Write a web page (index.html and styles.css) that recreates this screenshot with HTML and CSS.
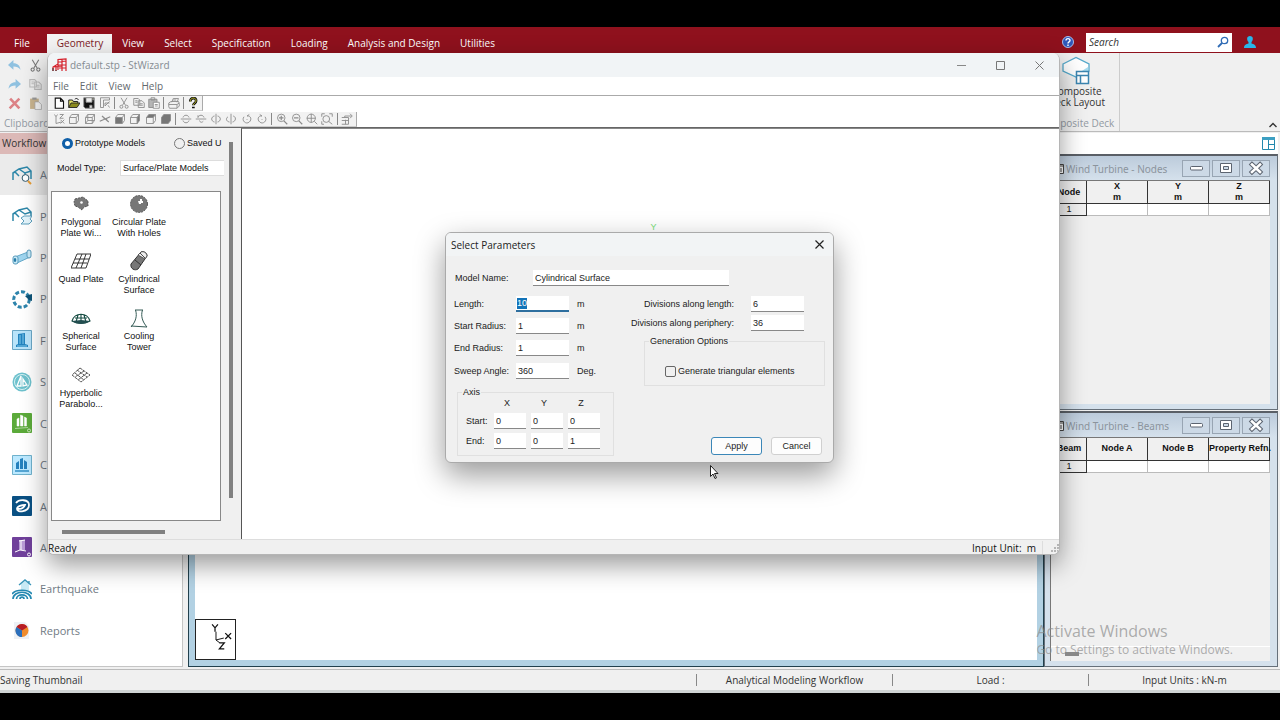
FILE: index.html
```html
<!DOCTYPE html>
<html lang="en">
<head>
  <meta charset="UTF-8">
  <meta name="viewport" content="width=device-width, initial-scale=1.0">
  <title>default.stp - StWizard</title>
  <link rel="stylesheet" href="styles.css">
</head>
<body>

<!-- shared icons -->
<svg class="defs" width="0" height="0">
  <symbol id="i-min" viewBox="0 0 26 15"><rect x="7.500" y="5.500" width="12" height="3.500" rx="1" fill="#fff" stroke="#5c6470"/></symbol>
  <symbol id="i-max" viewBox="0 0 26 15"><path d="M7.500 2.500h11v9h-11z" fill="#fff" stroke="#5c6470"/><path d="M10.500 5.500h5v3h-5z" fill="#ccd9e6" stroke="#5c6470"/></symbol>
  <symbol id="i-close" viewBox="0 0 26 15"><path d="M9 3.500l8 7.500M17 3.500L9 11" stroke="#5c6470" stroke-width="4.600" stroke-linecap="square"/><path d="M9 3.500l8 7.500M17 3.500L9 11" stroke="#fff" stroke-width="2.600" stroke-linecap="square"/></symbol>
  <symbol id="i-cut" viewBox="0 0 16 16"><path d="M4 1l6 10M12 1L6 11" /><circle cx="4.500" cy="13" r="2"/><circle cx="11.500" cy="13" r="2"/></symbol>
  <symbol id="i-copy" viewBox="0 0 16 16"><path d="M1 2h6l2 2v7H1zM7 5h5l3 3v6H7zM3 5h3M3 7h3M9 9h4M9 11h4"/></symbol>
  <symbol id="i-paste" viewBox="0 0 16 16"><path d="M1 3h11v11H1z" fill="#b5b5b5"/><path d="M4 1h5v3H4z"/><path d="M7 7h8v8H7zM9 10h4M9 12h4" fill="#fff"/></symbol>
</svg>

<div class="app">
  <nav class="tabs">
    <a href="#" class="tab file">File</a>
    <a href="#" class="tab active">Geometry</a>
    <a href="#" class="tab">View</a>
    <a href="#" class="tab">Select</a>
    <a href="#" class="tab">Specification</a>
    <a href="#" class="tab">Loading</a>
    <a href="#" class="tab">Analysis and Design</a>
    <a href="#" class="tab">Utilities</a>
    <div class="tabs-right">
      <button class="plain" aria-label="Help"><svg width="12" height="12" viewBox="0 0 12 12"><circle cx="6" cy="6" r="5.500" fill="#2f57ba" stroke="#a9bde8"/><path d="M4 4.500c0-2.500 4-2.500 4 0C8 6 6 5.800 6 7.500M6 8.500v1.500" fill="none" stroke="#fff" stroke-width="1.400"/></svg></button>
      <div class="search">
        <input type="text" placeholder="Search" aria-label="Search">
        <svg width="12" height="12" viewBox="0 0 12 12"><circle cx="7.500" cy="4.500" r="3.200" fill="none" stroke="#2f6bb5" stroke-width="1.300"/><path d="M5 7L1 11" stroke="#2f6bb5" stroke-width="1.800"/></svg>
      </div>
      <button class="plain user" aria-label="Account"><svg width="12" height="12" viewBox="0 0 12 12"><path d="M6 0c3.500 0 3.500 4 1.500 6v1.500c2 .5 4.500 1 4.500 4.500H0c0-3.500 2.500-4 4.500-4.500V6C2.500 4 2.500 0 6 0z" fill="#29b5e8"/></svg></button>
    </div>
  </nav>

  <div class="ribbon">
    <div class="clipboard">
      <div class="clip-icons">
        <svg viewBox="0 0 12 12"><path d="M0 5.500L5 1v3c4 0 6 2 6.500 6C10 7.800 8 7 5 7v3z" fill="#8fc1e0"/></svg>
        <svg class="line" viewBox="0 0 16 16"><use href="#i-cut"/></svg>
        <svg viewBox="0 0 12 12"><path d="M12 5.500L7 1v3C3 4 1 6 .500 10 2 7.800 4 7 7 7v3z" fill="#8fc1e0"/></svg>
        <svg class="line pale" viewBox="0 0 16 16"><use href="#i-copy"/></svg>
        <svg viewBox="0 0 12 12"><path d="M2 1.500l8.500 9M10.500 1.500L1.500 10.500" stroke="#dc8286" stroke-width="2.400"/></svg>
        <svg viewBox="0 0 12 12"><path d="M1 1.500h8V11H1z" fill="#c9b48f"/><path d="M3 .500h4v2H3z" fill="#9a9a9a"/><path d="M5.500 4.500H9l2.500 2.500v4.500h-6z" fill="#f7f7f7" stroke="#aaa" stroke-width=".7"/></svg>
      </div>
      <div class="group-name">Clipboard</div>
    </div>
    <div class="deck">
      <button class="plain deck-button">
        <svg width="30" height="30" viewBox="0 0 30 30"><path d="M2 8L15 1.500 28 8v7L15 21 2 15z" fill="#fff" stroke="#54a9cb" stroke-width="1.300"/><path d="M13 20l14-9v4h-9z" fill="#a8dcef"/><path d="M15.500 15.500h12v12h-12zM15.500 19.500h12M19.500 19.500v8" fill="#fff" stroke="#3c85b0" stroke-width="1.500"/></svg>
        <span>Composite</span>
        <span>Deck Layout</span>
      </button>
      <div class="group-name">Composite Deck</div>
    </div>
    <button class="plain collapse" aria-label="Collapse ribbon"><svg width="8" height="6" viewBox="0 0 8 6"><path d="M.500 5L4 1.500 7.500 5" fill="none" stroke="#333" stroke-width="1.400"/></svg></button>
  </div>

  <div class="workflow">
    <div class="workflow-title">Workflow</div>
    <div class="workflow-bar">
      <svg width="13" height="13" viewBox="0 0 13 13"><path d="M.500.500h12v12H.500zM6.500 3v9.500M6.500 7.500h6" fill="#fff" stroke="#2388ad"/><path d="M0 0h13v3H0z" fill="#3c9fc2"/></svg>
    </div>
  </div>

  <div class="main">
    <ul class="side">
      <li class="on"><svg viewBox="0 0 20 20"><path d="M1 15V8l6-4 8-2 4 4v8M1 8l2-1 4 4M7 4l6 4 6-2M13 8v4" fill="none" stroke="#2c86a8" stroke-width="1.500"/><circle cx="13.500" cy="13" r="3.400" fill="#fff" stroke="#30586c"/><path d="M16 16l3 3" stroke="#e59b35" stroke-width="2"/></svg>A</li>
      <li><svg viewBox="0 0 20 20"><path d="M1 15V8l6-4 8-2 4 4v5M1 8l2-1 4 4M7 4l6 4 6-2" fill="none" stroke="#2c86a8" stroke-width="1.500"/><path d="M9 12l3-2h8l-2 3 2 2-3 3H9l3-3z" fill="#e4f5fc" stroke="#5c9fbd"/></svg>P</li>
      <li><svg viewBox="0 0 20 20"><path d="M3 9l13-5 2 5-13 6z" fill="#9fd5ef" stroke="#65a9c9"/><rect x="15" y="2" width="4" height="8" rx="2" fill="#c8e9f7" stroke="#5a9cbd"/><rect x="1" y="8" width="5" height="8" rx="2" fill="#c8e9f7" stroke="#5a9cbd"/><ellipse cx="3" cy="12" rx="1.300" ry="2" fill="#277da8"/></svg>P</li>
      <li><svg viewBox="0 0 20 20"><circle cx="9.500" cy="10.500" r="7.800" fill="none" stroke="#2d84ac" stroke-width="3" stroke-dasharray="4 2"/><path d="M13 7l7-2v7l-3-1z" fill="#0d5378"/></svg>P</li>
      <li><svg viewBox="0 0 20 20"><path d="M.500.500h19v19H.500z" fill="#b9e4fa" stroke="#6aa7c6"/><path d="M6 4l7-1v11l3 1v2H4v-2l2-1z" fill="#2384bf"/><path d="M8 5v9M11 4v10M5 16h10" stroke="#83cbed"/></svg>F</li>
      <li><svg viewBox="0 0 20 20"><circle cx="10" cy="10" r="9.500" fill="#6dc1cd"/><circle cx="10" cy="10" r="7.500" fill="none" stroke="#d7f1f3"/><path d="M5 14L9 4v10zM11 7l4 6-4 1z" fill="none" stroke="#fff" stroke-width="1.300"/></svg>S</li>
      <li><svg viewBox="0 0 20 20"><rect width="20" height="20" rx="1" fill="#5baa3a"/><path d="M5 13V6l2-1v8zM8.500 13V2l2.500 1v10zM12.500 13V4l2 1v8zM3 15.500l13-1" fill="#fff" stroke="#fff" stroke-width=".5"/><circle cx="17" cy="17.500" r="1.500" fill="none" stroke="#cbe9bd"/></svg>C</li>
      <li><svg viewBox="0 0 20 20"><path d="M.500.500h19v19H.500z" fill="#bce9ff" stroke="#6fb2cd"/><path d="M4 14V8l3-2v8zM8 14V4l3-1v11zM12 14V5l3 2v7z" fill="#2481bd"/><path d="M3 16h14" stroke="#338fc6" stroke-width="1.500"/></svg>C</li>
      <li><svg viewBox="0 0 20 20"><rect width="20" height="20" rx="1" fill="#095083"/><path d="M4 7c3-4 13-4 13 2 0 7-12 8-12 4 0-3 5-4 8-4-1 3-4 4-7 4" fill="none" stroke="#fff" stroke-width="1.800"/></svg>A</li>
      <li><svg viewBox="0 0 20 20"><rect width="20" height="20" rx="1" fill="#70409b"/><path d="M7 3h6v10H7z" fill="#b99bd6"/><path d="M3 15l5-2 6 1M7 4l6-1M9 4v9" stroke="#fff" fill="none"/><circle cx="17" cy="17.500" r="1.500" fill="none" stroke="#fff"/></svg>A</li>
      <li><svg viewBox="0 0 20 20"><path d="M9 11V5l4-3 4 3v6" fill="#c8eaf5"/><path d="M7 6l6-5 6 5M17 2v3" fill="none" stroke="#3995b9" stroke-width="1.400"/><path d="M1 20c0-9 18-9 18 0M4.500 20c0-5.500 11-5.500 11 0M8 20c0-2.500 4-2.500 4 0M0 15c4-5 16-5 20 0" fill="none" stroke="#2388b1" stroke-width="1.700"/></svg>Earthquake</li>
      <li><svg viewBox="0 0 20 20"><path d="M2 2h11l4 4v13H2z" fill="#eef1f5"/><circle cx="10" cy="10.500" r="6.500" fill="#ef8b2d"/><path d="M10 10.500L4.500 7a6.500 6.500 0 0 1 11 0z" fill="#b71c24"/><path d="M10 10.500L4.500 7A6.500 6.500 0 0 0 10 17z" fill="#2a6fbd"/></svg>Reports</li>
    </ul>

    <div class="viewport">
      <svg class="axes" viewBox="0 0 40 40"><path d="M20.500 12v8.500l8-2M20.500 20.500l4 3" fill="none" stroke="#111"/><path d="M16.500 4.500l3 3.500 3-3.500M19.500 8v4M30 13.500l6 6M36 13.500l-6 6M24 23.500h5l-5 6h5" fill="none" stroke="#111" stroke-width="1.300"/></svg>
    </div>

    <div class="tables">
      <section class="mdi">
        <header>
          <svg class="doc" width="8" height="10" viewBox="0 0 8 10"><path d="M.500.500h7v9h-7zM.500 2h7M2 5h4M2 7h4" fill="#fff" stroke="#444"/></svg>
          <h2>Wind Turbine - Nodes</h2>
          <button aria-label="Minimize"><svg><use href="#i-min"/></svg></button>
          <button aria-label="Maximize"><svg><use href="#i-max"/></svg></button>
          <button aria-label="Close"><svg><use href="#i-close"/></svg></button>
        </header>
        <div class="sheet">
          <table>
            <thead><tr><th>Node</th><th>X<br>m</th><th>Y<br>m</th><th>Z<br>m</th></tr></thead>
            <tbody><tr><th>1</th><td></td><td></td><td></td></tr></tbody>
          </table>
        </div>
      </section>
      <section class="mdi">
        <header>
          <svg class="doc" width="8" height="10" viewBox="0 0 8 10"><path d="M.500.500h7v9h-7zM.500 2h7M2 5h4M2 7h4" fill="#fff" stroke="#444"/></svg>
          <h2>Wind Turbine - Beams</h2>
          <button aria-label="Minimize"><svg><use href="#i-min"/></svg></button>
          <button aria-label="Maximize"><svg><use href="#i-max"/></svg></button>
          <button aria-label="Close"><svg><use href="#i-close"/></svg></button>
        </header>
        <div class="sheet">
          <table>
            <thead><tr><th>Beam</th><th>Node A</th><th>Node B</th><th>Property Refn.</th></tr></thead>
            <tbody><tr><th>1</th><td></td><td></td><td></td></tr></tbody>
          </table>
          <div class="sheet-scroll"><div class="sheet-thumb"></div></div>
        </div>
      </section>
    </div>
  </div>

  <footer class="status">
    <div>Saving Thumbnail</div>
    <div>Analytical Modeling Workflow</div>
    <div>Load :</div>
    <div>Input Units : kN-m</div>
  </footer>
</div>

<div class="wizard">
  <header class="wizard-title">
    <svg width="15" height="14" viewBox="0 0 15 14"><path d="M1 13V9l5-3V1.500L14 1v12M6 2v10M10 1v12M6 4l8-1M6 7h8M1 9l9-1M4 8v5M7 10h7" fill="none" stroke="#d5202b" stroke-width="1.200"/><path d="M1 13v-3M4 12v1" stroke="#333"/></svg>
    <h1>default.stp - StWizard</h1>
    <button class="plain" aria-label="Minimize"><svg width="9" height="9" viewBox="0 0 9 9"><path d="M0 4.500h9" stroke="#888"/></svg></button>
    <button class="plain" aria-label="Maximize"><svg width="9" height="9" viewBox="0 0 9 9"><path d="M.500.500h8v8h-8z" fill="none" stroke="#777"/></svg></button>
    <button class="plain" aria-label="Close"><svg width="9" height="9" viewBox="0 0 9 9"><path d="M.500.500l8 8M8.500.500l-8 8" stroke="#777"/></svg></button>
  </header>
  <nav class="menu">
    <a href="#">File</a>
    <a href="#">Edit</a>
    <a href="#">View</a>
    <a href="#">Help</a>
  </nav>

  <div class="toolbar bar-file">
    <svg viewBox="0 0 16 16"><path d="M3 1.500h7l4 4V15H3zM10 1.500v4h4" fill="#fff" stroke="#111" stroke-width="1.500"/></svg>
    <svg viewBox="0 0 16 16"><path d="M1 14V4h5l1 2h6v2" fill="#e6e36a" stroke="#222" stroke-width="1.300"/><path d="M1 14l3-6h12l-4 6z" fill="#8b8a1e" stroke="#222"/><path d="M9 3c2-2 4-1 5 1" fill="none" stroke="#222"/></svg>
    <svg viewBox="0 0 16 16"><path d="M1 1h14v14H3l-2-2z" fill="#111"/><path d="M4 1h8v6H4z" fill="#eee"/><path d="M9 11h3v4H9z" fill="#eee"/><path d="M13 2h1v2h-1z" fill="#a5a53a"/></svg>
    <svg viewBox="0 0 16 16"><path d="M2 14V1h12v3H6v10zM8 8h6M8 8v4M8 12l6-6M12 11l2 3"/></svg>
    <i></i>
    <svg><use href="#i-cut"/></svg>
    <svg><use href="#i-copy"/></svg>
    <svg><use href="#i-paste"/></svg>
    <i></i>
    <svg viewBox="0 0 16 16"><path d="M5 7l2-5h7l-2 5M1 8l3-2h10l1 3v3l-3 3H2l-1-2zM1 10h11l3-2M12 10v5M7 4h4"/></svg>
    <i></i>
    <svg viewBox="0 0 16 16"><path d="M4.500 6C4 0 13 0 12 5.500c0 2.500-3.500 3-3.500 5.500M8.500 13v2" stroke="#111" stroke-width="3.600"/><path d="M4.500 6C4 0 13 0 12 5.500c0 2.500-3.500 3-3.500 5" stroke="#c6c52c" stroke-width="1.300"/></svg>
  </div>
  <div class="toolbar bar-view">
    <svg viewBox="0 0 16 16"><path d="M2 2l2 3 2-3M4 5v9l7-2M9 2h5l-5 5h5M10 9l5 5M15 9l-5 5"/></svg>
    <svg viewBox="0 0 16 16"><path d="M2 6h9v8H2zM2 6l3-4h9l-3 4M14 2v8l-3 4"/></svg>
    <svg viewBox="0 0 16 16"><path d="M2 6h9v8H2zM2 6l3-4h9l-3 4M14 2v8l-3 4M5 2v8h9M5 10l-3 4"/></svg>
    <svg viewBox="0 0 16 16"><path d="M1 11l14-6M4 4l9 8M6 8h5" stroke-width="1.600"/></svg>
    <svg viewBox="0 0 16 16"><path d="M2 6l3-4h9l-3 4M14 2v8l-3 4"/><path d="M2 6h9v8H2z" fill="#777"/></svg>
    <svg viewBox="0 0 16 16"><path d="M2 6h9v8H2zM2 6l3-4h9l-3 4"/><path d="M14 2v8l-3 4V6z" fill="#777"/></svg>
    <svg viewBox="0 0 16 16"><path d="M2 6h9v8H2zM14 2v8l-3 4"/><path d="M2 6l3-4h9l-3 4z" fill="#777"/></svg>
    <svg viewBox="0 0 16 16"><path d="M2 6l3-4h9v8l-3 4H2z" fill="#777"/></svg>
    <i></i>
    <svg viewBox="0 0 16 16"><path d="M1 8h14M4 6c1-4 7-4 8 0M4 10c1 4 7 4 8 0"/></svg>
    <svg viewBox="0 0 16 16"><path d="M1 8h14M4 6c1-4 7-4 8 0M6 10c1 3 3 3 5 1M4 6V3"/></svg>
    <svg viewBox="0 0 16 16"><path d="M8 1v14M6 4c-5 1-5 7 0 8M10 4c5 1 5 7 0 8"/></svg>
    <svg viewBox="0 0 16 16"><path d="M8 1v14M6 12c-5-1-5-5-2-7M10 12c5-1 5-7 1-8"/></svg>
    <svg viewBox="0 0 16 16"><path d="M4 5c-4 5 3 11 7 7 4-3 2-9-3-8M8 4l3-2M8 8v1"/></svg>
    <svg viewBox="0 0 16 16"><path d="M12 5c4 5-3 11-7 7-4-3-2-9 3-8M8 4L5 2M8 8v1"/></svg>
    <i></i>
    <svg viewBox="0 0 16 16"><circle cx="7" cy="6.500" r="5"/><path d="M4 6.500h6M7 3.500v6M10.500 10.500L15 15" stroke-width="1.600"/></svg>
    <svg viewBox="0 0 16 16"><circle cx="7" cy="6.500" r="5"/><path d="M4 6.500h6M10.500 10.500L15 15" stroke-width="1.600"/></svg>
    <svg viewBox="0 0 16 16"><circle cx="7" cy="7" r="5.500"/><path d="M1 7h12M7 1v12M11 11l4 4"/></svg>
    <svg viewBox="0 0 16 16"><circle cx="7" cy="8" r="4.500"/><path d="M1 5V1h4M11 1h4v4M1 11v4h3M10 11l5 4"/></svg>
    <i></i>
    <svg viewBox="0 0 16 16"><path d="M1 6h9v9H1M5 6V4h9M12 1l3 3-3 3M1 10h9M6 9v6"/></svg>
  </div>

  <div class="wizard-body">
    <aside class="models">
      <div class="models-main">
        <div class="sources">
          <label><input type="radio" name="source" checked>Prototype Models</label>
          <label><input type="radio" name="source">Saved U</label>
        </div>
        <div class="model-type">
          <label for="modelType">Model Type:</label>
          <select id="modelType"><option>Surface/Plate Models</option></select>
        </div>
        <ul class="shapes">
          <li><svg viewBox="0 0 20 20"><path d="M4 5l8-2 5 4v5l-4 1-2 3-4-3-3-1-1-4z" fill="#777" stroke="#555" stroke-dasharray="2 1"/><circle cx="10.500" cy="8.500" r="1.300" fill="#fff"/></svg>Polygonal<br>Plate Wi...</li>
          <li><svg viewBox="0 0 20 20"><circle cx="10" cy="10" r="8.500" fill="#777" stroke="#555" stroke-dasharray="2 1"/><path d="M9 7h2V5h2v2h1v2h-2v1h-2z" fill="#fff"/></svg>Circular Plate<br>With Holes</li>
          <li><svg viewBox="0 0 20 20"><path d="M6 3h14l-5 14H0zM4 8h14M2 12h14M11 3L5 17M15 3l-5 14" fill="none" stroke="#222" stroke-width=".9"/></svg>Quad Plate</li>
          <li><svg viewBox="0 0 20 20"><path d="M2 13L12 1c3-1 6 1 6 4L9 18c-3 2-8 0-7-5z" fill="#777" stroke="#333"/><path d="M9 4l3-3c3-1 6 1 6 4l-2 3z" fill="#eee" stroke="#444" stroke-width=".8"/><path d="M6 9l6 5M11 2l5 5" stroke="#222" stroke-width=".8"/></svg>Cylindrical<br>Surface</li>
          <li><svg viewBox="0 0 20 20"><path d="M1 13c3-9 15-9 18 0-5 3-13 3-18 0zM4 10h12M10 6v9M7 7l-2 7M13 7l2 7" fill="none" stroke="#174c43" stroke-width="1.100"/><path d="M1 13c5 4 13 4 18 0l-9-1z" fill="#224e50"/></svg>Spherical<br>Surface</li>
          <li><svg viewBox="0 0 20 20"><path d="M6 2h8M6.500 2c2 6 0 12-4.500 17M13.500 2c-2 6 0 12 4.500 17M2 18l16 1" fill="none" stroke="#345a55" stroke-width="1"/></svg>Cooling<br>Tower</li>
          <li><svg viewBox="0 0 20 20"><path d="M9 3l10 7-9 7L1 10zM6 5l10 7M4 8l9 7M13 6l-9 6M16 8l-9 7" fill="none" stroke="#444" stroke-width=".9" stroke-dasharray="3 .6"/></svg>Hyperbolic<br>Parabolo...</li>
        </ul>
        <div class="thumb-x"></div>
      </div>
      <div class="thumb-y"></div>
    </aside>
    <div class="drawing"><span class="y-mark">Y</span></div>
  </div>

  <footer class="wizard-status">
    <span>Ready</span>
    <span class="unit">Input Unit:&nbsp; m</span>
    <svg width="10" height="10" viewBox="0 0 10 10"><path d="M8 1h2v2H8zM5 4h2v2H5zM8 4h2v2H8zM2 7h2v2H2zM5 7h2v2H5zM8 7h2v2H8z" fill="#b5b5b5"/></svg>
  </footer>
</div>

<form class="dialog">
  <header class="dialog-title">
    <h2>Select Parameters</h2>
    <button type="button" class="plain" aria-label="Close"><svg width="9" height="9" viewBox="0 0 9 9"><path d="M.500.500l8 8M8.500.500l-8 8" stroke="#222" stroke-width="1.200"/></svg></button>
  </header>
  <div class="name-row">
    <label for="modelName">Model Name:</label>
    <input type="text" id="modelName" value="Cylindrical Surface">
  </div>
  <div class="columns">
    <div class="left">
      <div class="row"><label for="length">Length:</label><span class="field"><mark>10</mark><input type="text" id="length" aria-label="Length"></span><span>m</span></div>
      <div class="row"><label for="startRadius">Start Radius:</label><input type="text" id="startRadius" value="1"><span>m</span></div>
      <div class="row"><label for="endRadius">End Radius:</label><input type="text" id="endRadius" value="1"><span>m</span></div>
      <div class="row sweep"><label for="sweep">Sweep Angle:</label><input type="text" id="sweep" value="360"><span>Deg.</span></div>
      <fieldset class="axis">
        <legend>Axis</legend>
        <div class="axis-grid">
          <span></span><b>X</b><b>Y</b><b>Z</b>
          <span>Start:</span><input type="text" aria-label="Start X" value="0"><input type="text" aria-label="Start Y" value="0"><input type="text" aria-label="Start Z" value="0">
          <span>End:</span><input type="text" aria-label="End X" value="0"><input type="text" aria-label="End Y" value="0"><input type="text" aria-label="End Z" value="1">
        </div>
      </fieldset>
    </div>
    <div class="right">
      <div class="row"><label for="divLength">Divisions along length:</label><input type="text" id="divLength" value="6"></div>
      <div class="row"><label for="divPeriphery">Divisions along periphery:</label><input type="text" id="divPeriphery" value="36"></div>
      <fieldset class="options">
        <legend>Generation Options</legend>
        <label><input type="checkbox">Generate triangular elements</label>
      </fieldset>
      <div class="buttons">
        <button type="button" class="default">Apply</button>
        <button type="button">Cancel</button>
      </div>
    </div>
  </div>
</form>

<div class="watermark">
  <p>Activate Windows</p>
  <small>Go to Settings to activate Windows.</small>
</div>

<svg class="cursor" width="9" height="14" viewBox="0 0 9 14"><path d="M.500.500v11l2.500-2.500 2 4.500 1.500-.7-2-4.300H8z" fill="#fff" stroke="#222"/></svg>

</body>
</html>
```

FILE: styles.css
```css
* {
  box-sizing: border-box;
}
body {
  margin: 0;
  height: 100vh;
  padding: 27px 0;
  background: #000;
  overflow: hidden;
  font-family: "Open Sans", "Noto Sans", sans-serif;
  font-size: 10px;
  color: #333;
}
h1, h2, p, ul {
  margin: 0;
  padding: 0;
  font-weight: normal;
  list-style: none;
}
a {
  color: inherit;
  text-decoration: none;
}
button, input, select {
  font: inherit;
  color: inherit;
}
.plain {
  background: transparent;
  border: none;
  padding: 0;
  display: flex;
  align-items: center;
  justify-content: center;
}
.defs {
  position: absolute;
}
.app {
  height: 100%;
  display: flex;
  flex-direction: column;
  background: #f0f0f0;
}

/* Ribbon tabs */
.tabs {
  height: 26px;
  flex: none;
  display: flex;
  align-items: flex-end;
  background: #8f111d;
  color: #fff;
}
.tab {
  height: 19px;
  line-height: 18px;
  padding: 0 10px;
}
.tab.file {
  padding: 0 17px 0 14px;
}
.tab.active {
  background: #f3f3f3;
  color: #7c1823;
  padding: 0 9px 0 10px;
}
.tabs-right {
  margin-left: auto;
  height: 26px;
  display: flex;
  align-items: center;
  padding: 4px 24px 0 0;
}
.search {
  display: flex;
  align-items: center;
  width: 146px;
  height: 19px;
  margin: 0 12px;
  padding-right: 3px;
  background: #fff;
}
.search input {
  flex: 1;
  min-width: 0;
  border: none;
  padding: 0 3px;
  background: transparent;
  outline: none;
}
.search input::placeholder {
  color: #333;
  font-style: italic;
}

/* Ribbon */
.ribbon {
  height: 79px;
  flex: none;
  display: flex;
  border-bottom: 1px solid #bbb;
}
.clipboard {
  width: 48px;
  padding: 6px 0 0 8px;
}
.clip-icons {
  display: grid;
  grid-template-columns: 13px 13px;
  gap: 6px 8px;
}
.clip-icons svg {
  width: 13px;
  height: 13px;
}
.line {
  fill: none;
  stroke: #777;
  stroke-width: 1.3;
}
.line.pale {
  stroke: #bbb;
}
.group-name {
  color: #929aa3;
  line-height: 14px;
}
.clipboard .group-name {
  margin: 6px 0 0 -4px;
}
.deck {
  margin-left: auto;
  width: 86px;
  display: flex;
  flex-direction: column;
  align-items: center;
  border-right: 1px solid #ccc;
}
.deck-button {
  flex-direction: column;
  padding-top: 3px;
  line-height: 11px;
}
.deck .group-name {
  margin-top: 8px;
}
.collapse {
  width: 160px;
  justify-content: flex-end;
  align-items: flex-end;
  padding: 0 3px 3px 0;
}

/* Workflow line */
.workflow {
  height: 22px;
  flex: none;
  display: flex;
  padding: 1px 2px 0 0;
}
.workflow-title {
  width: 183px;
  padding-left: 2px;
  line-height: 21px;
  background: #dcb9b7;
}
.workflow-bar {
  flex: 1;
  display: flex;
  align-items: center;
  justify-content: flex-end;
  padding-right: 3px;
  background: #fff;
}

/* Work area */
.main {
  flex: 1;
  min-height: 0;
  display: flex;
  gap: 5px;
  padding: 0 2px 2px 0;
}
.side {
  width: 183px;
  display: grid;
  grid-auto-rows: 1fr;
  padding-bottom: 15px;
  background: #fff;
  border-right: 1px solid #c5c5c5;
  border-bottom: 1px solid #c5c5c5;
  font-size: 11px;
  color: #707a84;
}
.side li {
  display: flex;
  align-items: center;
  gap: 8px;
  padding-left: 12px;
}
.side li.on {
  background: #ebebeb;
}
.side svg {
  width: 20px;
  height: 20px;
}
.viewport {
  flex: 1;
  display: flex;
  align-items: flex-end;
  background: #fff;
  border: 7px solid #b2d1e3;
  outline: 1px solid #21404d;
  outline-offset: -1px;
}
.axes {
  width: 41px;
  height: 41px;
  border: 1px solid #222;
}
.tables {
  width: 234px;
  margin-left: -5px;
  display: flex;
  flex-direction: column;
  gap: 1px;
}
.mdi {
  flex: 1;
  display: flex;
  flex-direction: column;
  padding: 0 7px 5px 5px;
  background: #d5e1ec;
  border: 1px solid #66707a;
  border-top: 2px solid #5a5f66;
}
.mdi header {
  height: 24px;
  display: flex;
  align-items: center;
  gap: 2px;
  margin: 0 -7px 0 -5px;
  padding: 1px 7px 0 11px;
  background: linear-gradient(#bccbdb, #d5e1ec);
}
.mdi h2 {
  flex: 1;
  font: 10px "Noto Sans", sans-serif;
  color: #8b949d;
  white-space: nowrap;
}
.mdi header button {
  width: 28px;
  height: 17px;
  padding: 0;
  display: flex;
  background: #ccd9e6;
  border: 1px solid #98a5b3;
}
.mdi header button svg {
  width: 26px;
  height: 15px;
}
.sheet {
  flex: 1;
  display: flex;
  flex-direction: column;
  background: #f0f0f0;
  border-top: 1px solid #777;
  border-left: 1px solid #777;
}
.sheet table {
  table-layout: fixed;
  width: 100%;
  border-collapse: collapse;
  font: 9px/11px "Liberation Sans", sans-serif;
  color: #111;
}
.sheet th, .sheet td {
  padding: 0;
  border: 1px solid #333;
  background: #f0f0f0;
  white-space: nowrap;
}
.sheet tr th:first-child {
  width: 35px;
}
.sheet thead th {
  height: 22px;
  border-top: none;
}
.sheet tbody th {
  font-weight: normal;
}
.sheet td {
  height: 12px;
  background: #fff;
  border: 1px solid #bbb;
}
.sheet-scroll {
  margin-top: auto;
  height: 15px;
  border-top: 1px solid #fff;
  padding: 5px 0 0 14px;
}
.sheet-thumb {
  width: 14px;
  height: 4px;
  background: #888;
}
.status {
  flex: none;
  height: 24px;
  display: flex;
  align-items: center;
  border-top: 1px solid #bbb;
  border-bottom: 3px solid #cfd4d4;
  line-height: 12px;
}
.status div {
  width: 196px;
  text-align: center;
  border-left: 1px solid #888;
}
.status div:first-child {
  flex: 1;
  text-align: left;
  border: none;
}
.status div:last-child {
  width: 192px;
}

/* StWizard window */
.wizard {
  position: absolute;
  left: 47px;
  right: 220px;
  top: 53px;
  height: 502px;
  display: flex;
  flex-direction: column;
  background: #fff;
  border: 1px solid #b5b5b5;
  border-top: none;
  border-radius: 7px;
  box-shadow: 0 10px 26px rgba(0, 0, 0, 0.4);
  overflow: hidden;
}
.wizard-title {
  height: 24px;
  display: flex;
  align-items: center;
  gap: 3px;
  padding: 0 2px 0 4px;
  background: #f1f4f6;
}
.wizard-title h1 {
  flex: 1;
  font-size: 10px;
  color: #858b91;
}
.wizard-title button {
  width: 36px;
}
.menu {
  height: 19px;
  display: flex;
  gap: 11px;
  padding-left: 5px;
  line-height: 18px;
  color: #63686d;
  border-bottom: 1px solid #aaa;
}
.toolbar {
  height: 15px;
  display: flex;
  align-items: center;
  justify-content: space-between;
  padding: 0 3px 0 5px;
  background: #f2f2f2;
  border-right: 1px solid #aaa;
  border-bottom: 1px solid #ccc;
}
.toolbar svg {
  width: 12px;
  height: 12px;
  fill: none;
  stroke: #8c8c8c;
  stroke-width: 1.2;
}
.toolbar i {
  width: 1px;
  height: 12px;
  background: #888;
}
.bar-file {
  width: 155px;
  margin-bottom: 1px;
}
.bar-view {
  width: 309px;
}
.wizard-body {
  flex: 1;
  min-height: 0;
  display: flex;
  border-top: 1px solid #666;
  font: 9px/11px "Liberation Sans", sans-serif;
  color: #111;
}
.models {
  width: 193px;
  display: flex;
  background: #f0f0f0;
}
.models-main {
  width: 176px;
  padding: 7px 0 5px 3px;
  display: flex;
  flex-direction: column;
}
.sources {
  display: flex;
  gap: 29px;
  padding-left: 11px;
  height: 16px;
}
.sources label {
  display: flex;
  align-items: center;
  gap: 2px;
  white-space: nowrap;
}
.sources input {
  appearance: none;
  width: 11px;
  height: 11px;
  margin: 0;
  border: 1px solid #777;
  border-radius: 50%;
}
.sources input:checked {
  border: 3px solid #0f5fa8;
  background: #fff;
}
.model-type {
  display: flex;
  align-items: center;
  height: 16px;
  margin-top: 9px;
  padding-left: 6px;
}
.model-type label {
  width: 63px;
}
.model-type select {
  appearance: none;
  flex: 1;
  height: 16px;
  padding: 0 2px;
  border: 1px solid #ddd;
  border-right: none;
  border-radius: 0;
  background: #fff;
}
.shapes {
  flex: 1;
  width: 170px;
  margin: 15px 0 9px;
  padding-top: 2px;
  display: grid;
  grid-template-columns: 58px 58px;
  grid-auto-rows: 57px;
  background: #fff;
  border: 1px solid #888;
  text-align: center;
}
.shapes svg {
  display: block;
  width: 20px;
  height: 20px;
  margin: 0 auto 3px;
}
.shapes li {
  white-space: nowrap;
}
.thumb-x {
  width: 103px;
  height: 4px;
  margin-left: 11px;
  background: #808080;
}
.thumb-y {
  width: 4px;
  margin: 14px 0 41px 5px;
  background: #808080;
}
.drawing {
  flex: 1;
  background: #fff;
  border-left: 1px solid #555;
  border-top: 1px solid #888;
}
.y-mark {
  display: block;
  margin: 93px 0 0 6px;
  text-align: center;
  color: #7be07b;
}
.wizard-status {
  height: 15px;
  display: flex;
  align-items: center;
  padding-top: 1px;
  background: #f0f0f0;
  border-top: 1px solid #ddd;
  color: #111;
}
.wizard-status .unit {
  margin-left: auto;
  padding-right: 6px;
  margin-right: 6px;
  border-right: 1px solid #ddd;
}

/* Parameters dialog */
.dialog {
  position: absolute;
  left: 445px;
  top: 232px;
  width: 389px;
  height: 231px;
  background: #f0f0f0;
  border: 1px solid #aaa;
  border-radius: 6px;
  box-shadow: 0 12px 30px rgba(0, 0, 0, 0.4);
  overflow: hidden;
  font: 9px/11px "Liberation Sans", sans-serif;
  color: #222;
}
.dialog-title {
  height: 23px;
  display: flex;
  align-items: center;
  justify-content: space-between;
  padding: 0 9px 0 5px;
  background: #f2f4f5;
}
.dialog-title h2 {
  font: 10px "Open Sans", sans-serif;
}
.dialog input[type="text"] {
  width: 53px;
  height: 16px;
  padding: 0 2px;
  border: none;
  border-bottom: 1px solid #888;
  background: #fff;
  outline: none;
}
.name-row {
  display: flex;
  align-items: center;
  margin: 14px 0 10px 9px;
}
.name-row label {
  width: 78px;
}
.dialog .name-row input {
  width: 196px;
}
.columns {
  display: flex;
  justify-content: space-between;
  padding: 0 8px;
}
.left {
  width: 161px;
}
.row {
  display: flex;
  align-items: center;
  margin-bottom: 6px;
}
.left .row label {
  width: 62px;
}
.left .row > span:last-child {
  margin-left: 8px;
}
.field {
  display: flex;
  align-items: center;
  width: 53px;
  height: 16px;
  padding-left: 1px;
  background: #fff;
  border-bottom: 2px solid #2e6f9f;
}
.field mark {
  background: #1373b8;
  color: #fff;
}
.dialog .field input {
  flex: 1;
  min-width: 0;
  height: 13px;
  border: none;
  padding: 0;
}
.left .sweep {
  margin-top: 7px;
}
fieldset {
  margin: 0;
  padding: 0;
  border: 1px solid #e0e0e0;
}
legend {
  margin-left: 4px;
  padding: 0 1px;
}
.axis {
  width: 157px;
  height: 69px;
  margin: 8px 0 0 3px;
}
.axis-grid {
  display: grid;
  grid-template-columns: 23px 32px 32px 32px;
  gap: 4px 5px;
  align-items: center;
  padding-left: 8px;
}
.axis-grid b {
  font-weight: normal;
  text-align: center;
  padding-right: 6px;
}
.dialog .axis-grid input {
  width: 32px;
}
.right {
  width: 195px;
  display: flex;
  flex-direction: column;
}
.right .row {
  margin-bottom: 3px;
}
.right .row label {
  width: 104px;
  margin-right: 17px;
  text-align: right;
  white-space: nowrap;
}
.options {
  height: 50px;
  margin: 2px 0 0 14px;
}
.options label {
  display: flex;
  align-items: center;
  gap: 2px;
  margin: 19px 0 0 20px;
}
.options input {
  appearance: none;
  width: 11px;
  height: 11px;
  margin: 0;
  border: 1px solid #666;
  border-radius: 2px;
}
.buttons {
  margin: auto 3px 1px 0;
  display: flex;
  justify-content: flex-end;
  gap: 9px;
}
.buttons button {
  width: 51px;
  height: 18px;
  padding: 0;
  background: #fdfdfd;
  border: 1px solid #d0d0d0;
  border-radius: 3px;
}
.buttons .default {
  border-color: #3b87b8;
}

.watermark {
  position: absolute;
  right: 47px;
  top: 621px;
  color: rgba(140, 140, 140, 0.7);
}
.watermark p {
  font-size: 16px;
  line-height: 20px;
}
.watermark small {
  font-size: 12px;
  line-height: 18px;
}
.cursor {
  position: absolute;
  left: 710px;
  top: 465px;
}
```
